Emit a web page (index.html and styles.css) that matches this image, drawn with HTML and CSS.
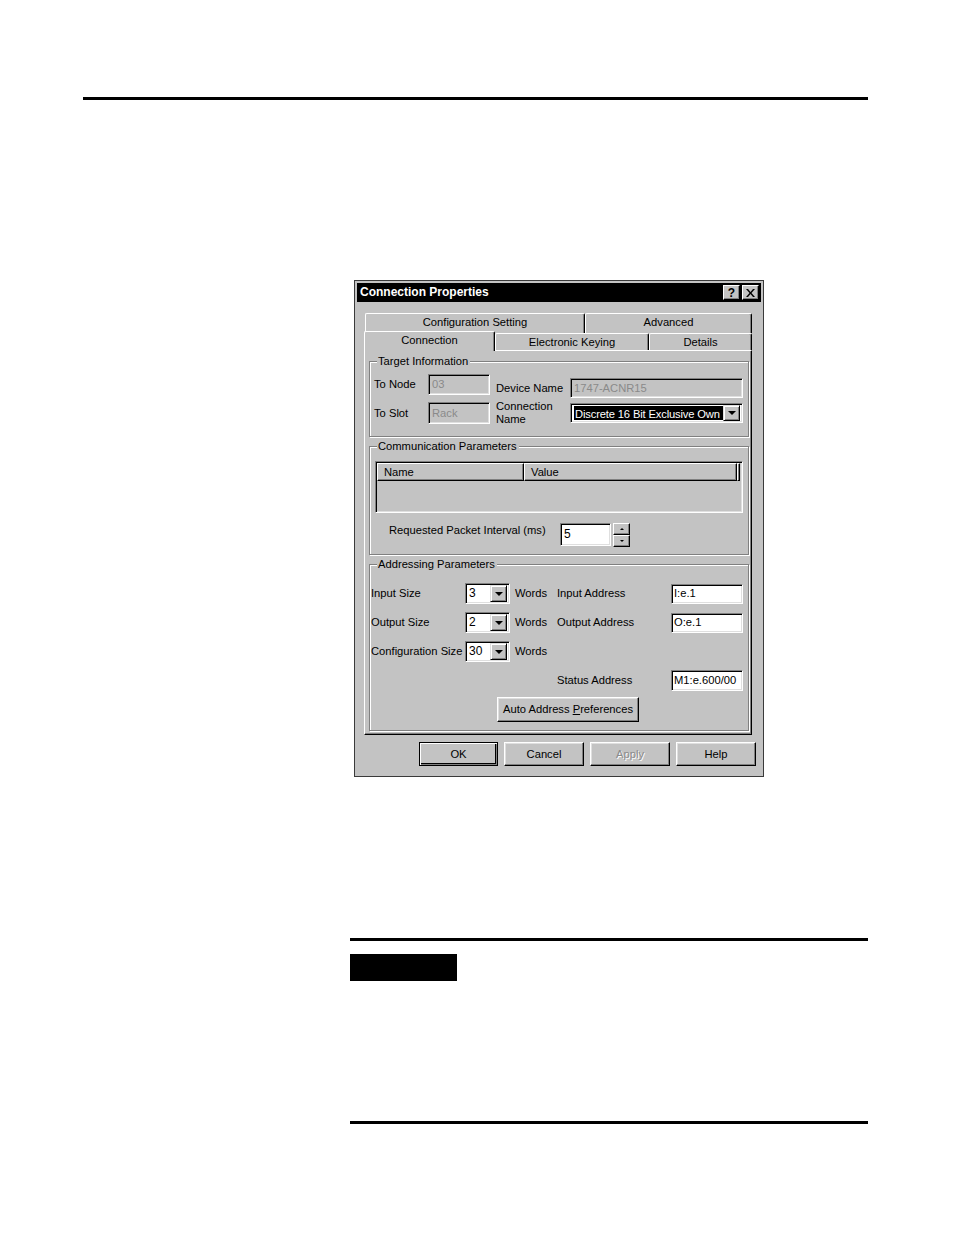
FILE: index.html
```html
<!DOCTYPE html>
<html>
<head>
<meta charset="utf-8">
<link rel="stylesheet" href="styles.css">
</head>
<body>
<div class="page">
  <div class="rule-top"></div>

  <div class="dialog">
    <div class="titlebar">
      <span class="title">Connection Properties</span>
      <span class="tb-btns">
        <span class="tb-btn">?</span>
        <span class="tb-btn"><svg width="9" height="8" viewBox="0 0 9 8"><path d="M0 0h2l2.5 3 2.5-3h2L5.5 4 9 8H7L4.5 5 2 8H0l3.5-4z" fill="#000"/></svg></span>
      </span>
    </div>

    <div class="tabs">
      <div class="tabrow back">
        <div class="tab w-cfg">Configuration Setting</div>
        <div class="tab w-adv">Advanced</div>
      </div>
      <div class="tabrow front">
        <div class="tab sel w-con">Connection</div>
        <div class="tab w-key">Electronic Keying</div>
        <div class="tab w-det">Details</div>
      </div>
    </div>

    <div class="panel">
      <div class="group g1">
        <div class="legend">Target Information</div>
        <div class="row r1">
          <div class="lbl l-node">To Node</div>
          <div class="field dis f-node">03</div>
          <div class="lbl l-dev">Device Name</div>
          <div class="field dis f-dev">1747-ACNR15</div>
        </div>
        <div class="row r2">
          <div class="lbl l-slot">To Slot</div>
          <div class="field dis f-slot">Rack</div>
          <div class="lbl l-conn">Connection<br>Name</div>
          <div class="field f-sel">
            <span class="hl">Discrete 16 Bit Exclusive Own</span>
            <span class="dd"><span class="tri"></span></span>
          </div>
        </div>
      </div>

      <div class="group g2">
        <div class="legend">Communication Parameters</div>
        <div class="list">
          <div class="lhead">
            <div class="hcol c-name">Name</div>
            <div class="hcol c-val">Value</div>
            <div class="hcol c-end"></div>
          </div>
        </div>
        <div class="row rpi">
          <div class="lbl l-rpi">Requested Packet Interval (ms)</div>
          <div class="field f-rpi">5</div>
          <div class="spin">
            <span class="sp"><span class="tri-up"></span></span>
            <span class="sp"><span class="tri-dn"></span></span>
          </div>
        </div>
      </div>

      <div class="group g3">
        <div class="legend">Addressing Parameters</div>
        <div class="row ar">
          <div class="lbl l-size">Input Size</div>
          <div class="field combo"><span class="cv">3</span><span class="dd"><span class="tri"></span></span></div>
          <div class="lbl l-words">Words</div>
          <div class="lbl l-addr">Input Address</div>
          <div class="field f-addr">I:e.1</div>
        </div>
        <div class="row ar">
          <div class="lbl l-size">Output Size</div>
          <div class="field combo"><span class="cv">2</span><span class="dd"><span class="tri"></span></span></div>
          <div class="lbl l-words">Words</div>
          <div class="lbl l-addr">Output Address</div>
          <div class="field f-addr">O:e.1</div>
        </div>
        <div class="row ar">
          <div class="lbl l-size">Configuration Size</div>
          <div class="field combo"><span class="cv">30</span><span class="dd"><span class="tri"></span></span></div>
          <div class="lbl l-words">Words</div>
        </div>
        <div class="row ar stat">
          <div class="lbl l-stat">Status Address</div>
          <div class="field f-addr">M1:e.600/00</div>
        </div>
        <div class="row brow">
          <div class="btn b-auto"><span>Auto Address <u>P</u>references</span></div>
        </div>
      </div>
    </div>

    <div class="buttons">
      <div class="btn def">OK</div>
      <div class="btn">Cancel</div>
      <div class="btn disabled">Apply</div>
      <div class="btn">Help</div>
    </div>
  </div>

  <div class="rule rule-mid"></div>
  <div class="notebox"></div>
  <div class="rule rule-bot"></div>
</div>
</body>
</html>
```

FILE: styles.css
```css
* { box-sizing: border-box; }
html, body { margin: 0; padding: 0; background: #fff; }
body { font-family: "Liberation Sans", Arial, sans-serif; }
.page { width: 954px; height: 1235px; padding-top: 97px; overflow: hidden; }

.rule-top { margin-left: 83px; width: 785px; height: 3px; background: #000; }

.dialog {
  margin: 180px 0 0 354px;
  width: 410px;
  background: #c3c3c3;
  border: 1px solid #3a3a3a;
  padding: 2px;
  font-size: 11.2px;
  color: #000;
  line-height: 13px;
}
.titlebar {
  height: 19px;
  background: #000;
  display: flex;
  align-items: center;
  justify-content: space-between;
  padding: 0 2px 0 3px;
}
.title { color: #fff; font-weight: bold; font-size: 12px; }
.tb-btns { display: flex; gap: 2px; }
.tb-btn {
  width: 17px; height: 15px;
  background: #c3c3c3;
  border: 1px solid; border-color: #fff #000 #000 #fff;
  box-shadow: inset -1px -1px #808080;
  display: flex; align-items: center; justify-content: center;
  font-weight: bold; font-size: 12px; line-height: 12px;
}

.tabs { margin-top: 11px; }
.tabrow { display: flex; }
.tabrow.back { margin-left: 8px; height: 20px; }
.tabrow.front { margin-left: 7px; margin-top: -2px; height: 19px; align-items: flex-end; }
.tab {
  background: #c3c3c3;
  border-top: 1px solid #fff;
  border-left: 1px solid #fff;
  border-right: 1px solid #000;
  border-radius: 2px 2px 0 0;
  box-shadow: inset -1px 0 #808080;
  text-align: center;
  line-height: 17px;
  height: 100%;
}
.tabrow.front .tab { height: 17px; }
.tabrow.front .tab.sel { height: 20px; margin-bottom: -1px; position: relative; z-index: 2; line-height: 17px; }
.w-cfg { width: 220px; }
.w-adv { width: 167px; }
.w-con { width: 131px; }
.w-key { width: 154px; }
.w-det { width: 103px; }

.panel {
  margin-left: 7px;
  width: 388px;
  border: 1px solid; border-color: #fff #000 #000 #fff;
  box-shadow: inset -1px -1px #808080;
  padding: 10px 3px 3px 4px;
}

.group {
  border: 1px solid #808080;
  box-shadow: inset 1px 1px #fff, 1px 1px #fff;
  width: 380px;
}
.group + .group { margin-top: 9px; }
.legend {
  width: fit-content;
  margin: -7px 0 0 3px;
  padding: 0 2px 0 1px;
  background: #c3c3c3;
  line-height: 13px;
}
.g1 { padding: 0 4px 10px 4px; }
.g1 .legend { margin-bottom: 6px; }
.g2 { padding: 0 4px 7px 4px; }
.g2 .legend { margin-bottom: 8px; }
.g3 { padding: 0 4px 8px 1px; }
.g3 .legend { margin-left: 6px; margin-bottom: 12px; }

.row { display: flex; }
.lbl { white-space: nowrap; }

.field {
  background: #fff;
  border: 1px solid; border-color: #808080 #fff #fff #808080;
  box-shadow: inset 1px 1px #000, inset -1px -1px #dfdfdf;
  padding: 0 3px;
  white-space: nowrap;
  overflow: hidden;
  display: flex; align-items: center;
}
.field.dis { background: #c3c3c3; color: #8a8a8a; }

.r1 { height: 24px; align-items: flex-start; }
.l-node { width: 54px; line-height: 21px; }
.f-node { width: 62px; height: 21px; }
.l-dev { width: 74px; margin-left: 6px; margin-top: 4px; line-height: 20px; }
.f-dev { width: 173px; height: 20px; margin-top: 4px; }
.r2 { height: 26px; margin-top: 2px; align-items: flex-start; }
.l-slot { width: 54px; line-height: 22px; margin-top: 2px; }
.f-slot { width: 62px; height: 22px; margin-top: 2px; }
.l-conn { width: 74px; margin-left: 6px; line-height: 13px; }
.f-sel { width: 173px; height: 20px; margin-top: 3px; padding: 2px 2px 2px 3px; justify-content: space-between; }
.hl { background: #000; color: #fff; width: 150px; height: 100%; overflow: hidden; line-height: 16px; padding-left: 1px; letter-spacing: -0.15px; }
.dd {
  width: 17px; height: 16px; flex: none;
  background: #c3c3c3;
  border: 1px solid; border-color: #dfdfdf #000 #000 #dfdfdf;
  box-shadow: inset 1px 1px #fff, inset -1px -1px #808080;
  display: flex; align-items: center; justify-content: center;
}
.tri { width: 0; height: 0; border-left: 4px solid transparent; border-right: 4px solid transparent; border-top: 4px solid #000; }

.list {
  margin: 2px 0 0 1px;
  width: 368px; height: 52px;
  border: 1px solid; border-color: #808080 #fff #fff #808080;
  box-shadow: inset 1px 1px #000, inset -1px -1px #dfdfdf;
  padding: 1px 2px 0 1px;
}
.lhead { display: flex; height: 18px; }
.hcol {
  height: 18px;
  border: 1px solid; border-color: #fff #000 #000 #fff;
  box-shadow: inset -1px -1px #808080;
  padding-left: 6px;
  line-height: 16px;
}
.c-name { width: 147px; }
.c-val { width: 213px; }
.c-end { flex: 1; padding: 0; }

.rpi { margin-top: 10px; align-items: flex-start; }
.l-rpi { margin-left: 15px; width: 171px; line-height: 14px; margin-top: 0px; }
.f-rpi { width: 51px; height: 23px; padding-left: 3px; font-size: 12px; }
.spin { display: flex; flex-direction: column; margin-left: 2px; width: 17px; height: 24px; }
.sp {
  height: 12px; width: 17px;
  background: #c3c3c3;
  border: 1px solid; border-color: #fff #000 #000 #fff;
  box-shadow: inset -1px -1px #808080;
  display: flex; align-items: center; justify-content: center;
}
.tri-up { width: 0; height: 0; border-left: 2px solid transparent; border-right: 2px solid transparent; border-bottom: 2px solid #000; }
.tri-dn { width: 0; height: 0; border-left: 2px solid transparent; border-right: 2px solid transparent; border-top: 2px solid #000; }

.ar { height: 21px; align-items: center; }
.ar + .ar { margin-top: 8px; }
.l-size { width: 94px; }
.combo { width: 45px; height: 21px; padding: 2px 2px 2px 3px; justify-content: space-between; font-size: 12px; }
.combo .dd { height: 17px; }
.l-words { width: 42px; margin-left: 5px; }
.l-addr { width: 114px; }
.f-addr { width: 72px; height: 20px; padding-left: 2px; }
.stat .l-stat { margin-left: 186px; width: 114px; }
.stat .f-addr { height: 21px; }

.brow { margin-top: 6px; }
.btn {
  height: 24px;
  width: 79px;
  background: #c3c3c3;
  border: 1px solid; border-color: #fff #000 #000 #fff;
  box-shadow: inset -1px -1px #808080, inset 1px 1px #dfdfdf;
  display: flex; align-items: center; justify-content: center;
  white-space: nowrap;
}
.b-auto { width: 142px; height: 25px; margin-left: 126px; }
.btn u { text-decoration: underline; text-underline-offset: 1px; }

.buttons {
  display: flex; justify-content: flex-end; gap: 6px;
  margin-top: 7px;
  padding: 0 5px 8px 0;
}
.buttons .btn { width: 80px; }
.btn.def { border: 1px solid #000; box-shadow: inset 1px 1px #fff, inset -1px -1px #808080, inset -2px -2px #000; width: 79px; }
.btn.disabled { color: #8a8a8a; text-shadow: 1px 1px #fff; }

.rule { margin-left: 350px; width: 518px; height: 3px; background: #000; }
.rule-mid { margin-top: 161px; }
.notebox { margin: 13px 0 0 350px; width: 107px; height: 27px; background: #000; }
.rule-bot { margin-top: 140px; }
```
